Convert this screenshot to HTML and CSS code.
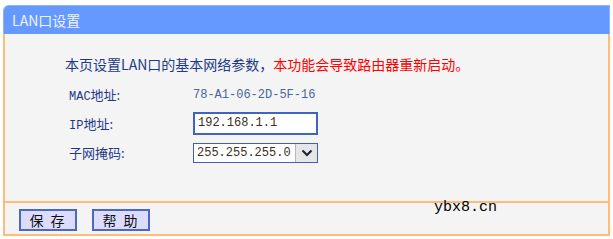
FILE: index.html
```html
<!DOCTYPE html>
<html lang="zh-CN">
<head>
<meta charset="utf-8">
<title>LAN口设置</title>
<link rel="stylesheet" href="styles.css">
</head>
<body>
<div class="panel">
  <div class="head">LAN口设置</div>
  <div class="main">
    <p class="intro">本页设置LAN口的基本网络参数，<span class="warn">本功能会导致路由器重新启动。</span></p>
    <div class="form">
      <div class="label"><span class="lat">MAC</span>地址:</div>
      <div class="value mono mac">78-A1-06-2D-5F-16</div>
      <div class="label"><span class="lat">IP</span>地址:</div>
      <div class="value"><div class="input mono">192.168.1.1</div></div>
      <div class="label">子网掩码:</div>
      <div class="value">
        <div class="select">
          <span class="mono sel-text">255.255.255.0</span>
          <span class="arrow"><svg width="12" height="8" viewBox="0 0 12 8"><path d="M1.5 1.5 L6 6 L10.5 1.5" fill="none" stroke="#1a2340" stroke-width="2.2"/></svg></span>
        </div>
      </div>
    </div>
  </div>
  <div class="foot">
    <button class="btn">保 存</button>
    <button class="btn">帮 助</button>
  </div>
</div>
<div class="watermark">ybx8.cn</div>
</body>
</html>
```
FILE: styles.css
```css
html, body {
  margin: 0;
  padding: 0;
  background: #ffffff;
}
body {
  font-family: "Noto Sans CJK SC", "Noto Sans", sans-serif;
  position: relative;
  width: 613px;
  height: 239px;
  overflow: hidden;
}
.panel {
  margin: 5px 3px 0 3px;
  width: 607px;
}
.head {
  height: 28px;
  background: #6699ff;
  border: 1px solid #8db0ff;
  border-bottom: none;
  border-top-left-radius: 6px;
  color: #eef3ff;
  font-size: 14px;
  line-height: 28px;
  padding-left: 8px;
}
.main {
  background: #f4f4f4;
  border-left: 2px solid #ffbb77;
  border-right: 2px solid #ffbb77;
  border-bottom: 2px solid #ffbb77;
  height: 167px;
}
.intro {
  margin: 0;
  padding: 20px 0 0 60px;
  line-height: 20px;
  font-size: 14px;
  color: #1d3a86;
}
.warn {
  color: #ff0000;
}
.form {
  display: grid;
  grid-template-columns: 124px 130px;
  grid-auto-rows: 29px;
  padding: 6px 0 0 64px;
  align-items: center;
}
.label {
  font-size: 13px;
  color: #1f3a8a;
}
.lat {
  font-family: "Liberation Mono", monospace;
  font-size: 12px;
}
.mono {
  font-family: "Liberation Mono", "DejaVu Sans Mono", monospace;
  font-size: 12px;
}
.mac {
  color: #4a679a;
}
.input {
  height: 19px;
  border: 2px solid #4262c4;
  background: #ffffff;
  color: #3a3020;
  line-height: 19px;
  padding-left: 3px;
  box-sizing: content-box;
  width: 118px;
}
.select {
  display: flex;
  align-items: stretch;
  width: 123px;
  height: 18px;
  border: 1px solid #3f5fc0;
  background: #ffffff;
}
.sel-text {
  flex: 1;
  line-height: 18px;
  padding-left: 3px;
  color: #3a3020;
}
.arrow {
  width: 21px;
  background: #e6e6e6;
  border-left: 1px solid #b8b8b8;
  display: flex;
  align-items: center;
  justify-content: center;
}
.foot {
  background: #f4f4f4;
  border-left: 2px solid #ffbb77;
  border-right: 2px solid #ffbb77;
  border-bottom: 2px solid #ffbb77;
  display: flex;
  align-items: flex-start;
  gap: 15px;
  padding: 6px 0 0 14px;
  box-sizing: border-box;
  height: 33px;
}
.btn {
  width: 58px;
  height: 22px;
  margin: 0;
  padding: 0;
  background: #dcdcfe;
  border: 2px solid #4a68c6;
  font-family: "Noto Sans CJK SC", sans-serif;
  font-size: 14px;
  line-height: 16px;
  color: #111111;
  letter-spacing: 2px;
}
.watermark {
  position: absolute;
  left: 434px;
  top: 199px;
  font-family: "Liberation Mono", monospace;
  font-size: 15px;
  color: #000000;
}
```
